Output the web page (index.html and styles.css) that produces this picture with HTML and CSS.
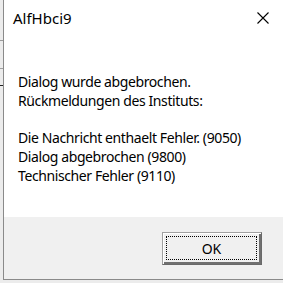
FILE: index.html
```html
<!DOCTYPE html>
<html>
<head>
<meta charset="utf-8">
<link rel="stylesheet" href="styles.css">
</head>
<body>
<div class="strip"></div>
<div class="dialog">
  <div class="titlebar">
    <span class="title">AlfHbci9</span>
    <svg class="close" width="12" height="12" viewBox="0 0 12 12"><path d="M0.5 0.5 L11.5 11.5 M11.5 0.5 L0.5 11.5" stroke="#000" stroke-width="1.1" fill="none"/></svg>
  </div>
  <div class="content">
    <div class="msg">
      <div>Dialog wurde abgebrochen.</div>
      <div>Rückmeldungen des Instituts:</div>
      <div>&nbsp;</div>
      <div>Die Nachricht enthaelt Fehler. (9050)</div>
      <div>Dialog abgebrochen (9800)</div>
      <div>Technischer Fehler (9110)</div>
    </div>
  </div>
  <div class="footer">
    <button class="ok"><span class="focus">OK</span></button>
  </div>
</div>
</body>
</html>
```
FILE: styles.css
```css
html, body {
  margin: 0;
  padding: 0;
  width: 283px;
  height: 283px;
  overflow: hidden;
  background: #ececec;
  font-family: "Noto Sans", "Open Sans", sans-serif;
}
body {
  display: flex;
  align-items: flex-start;
}
.strip {
  width: 3px;
  height: 283px;
  flex: none;
  background:
    linear-gradient(#ececec 0 40px, #9a9a9a 40px 41px, #ececec 41px 68px, #a0a0a0 68px 69px, #ececec 69px 85px, #222 85px 86px, #ececec 86px 100%);
}
.dialog {
  width: 279px;
  height: 279px;
  flex: none;
  border-left: 1px solid #8a8a8a;
  border-bottom: 1px solid #8a8a8a;
  background: #fff;
  display: flex;
  flex-direction: column;
}
.titlebar {
  height: 36px;
  display: flex;
  align-items: center;
  padding-left: 9px;
  position: relative;
}
.title {
  font-size: 15px;
  color: #000;
}
.close {
  position: absolute;
  left: 253px;
  top: 12px;
}
.content {
  flex: 1;
  padding: 37px 0 0 14px;
}
.msg {
  font-size: 14px;
  letter-spacing: -0.4px;
  line-height: 18.7px;
  color: #000;
  white-space: nowrap;
}
.footer {
  height: 62px;
  background: #f0f0f0;
  padding: 15px 0 0 158px;
  box-sizing: border-box;
}
.ok {
  width: 100px;
  height: 33px;
  margin: 0;
  padding: 3px;
  box-sizing: border-box;
  background: #f0f0f0;
  border: 1px solid #a0a0a0;
  border-right-color: #696969;
  border-bottom-color: #696969;
  box-shadow: inset 1px 1px #ffffff, inset -2px -2px #707070;
  font-family: "Noto Sans", "Open Sans", sans-serif;
  font-size: 14px;
  color: #000;
  display: flex;
}
.focus {
  flex: 1;
  border: 1px dotted #000;
  display: flex;
  align-items: center;
  justify-content: center;
  margin: 0 1px 1px 0;
}
```
